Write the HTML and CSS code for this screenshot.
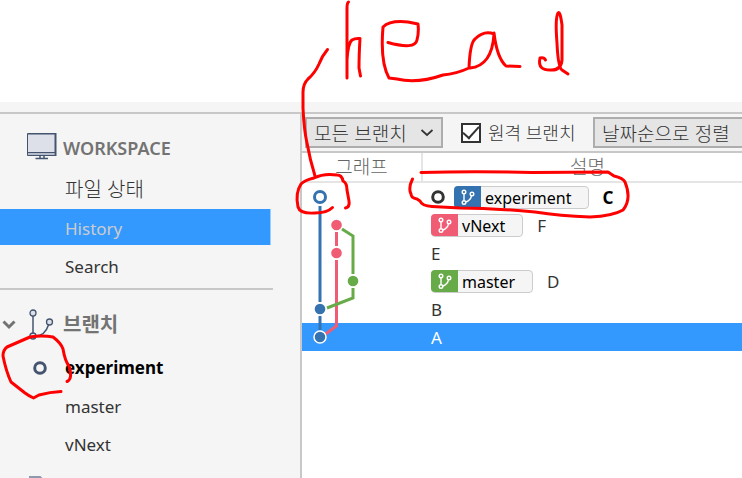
FILE: index.html
```html
<!DOCTYPE html>
<html lang="ko">
<head>
<meta charset="utf-8">
<title>History</title>
<link rel="stylesheet" href="styles.css">
</head>
<body>
<svg width="0" height="0" class="defs" aria-hidden="true">
  <symbol id="branch" viewBox="0 0 27 22">
    <g fill="none" stroke="#fff" stroke-width="1.4">
      <circle cx="10" cy="6" r="1.8"/><circle cx="10" cy="16.5" r="1.8"/><circle cx="18" cy="8" r="1.8"/>
      <path d="M10 8v6.5M17.5 10c-.8 3-2.5 5-5.7 6"/>
    </g>
  </symbol>
</svg>
<div class="app">
  <div class="strip"></div>
  <div class="body">
    <nav class="sidebar">
      <section class="group">
        <h2 class="heading">
          <svg class="monitor" width="32" height="28" viewBox="0 0 32 28">
            <path d="M1.5 1.5h28v22h-28z" fill="#dde0e8" stroke="#44546f" stroke-width="1"/>
            <path d="M2 2.5h27" stroke="#8e99ad"/><path d="M29.5 1v23" stroke="#44546f" stroke-width="2"/>
            <path d="M1 20.5h29" stroke="#44546f"/><path d="M2 22h26" stroke="#8e99ad"/>
            <path d="M14 24v2M18 24v2M9.500 26.500h12.500" stroke="#44546f" stroke-width="1.500"/>
          </svg>
          <span>WORKSPACE</span>
        </h2>
        <a class="item ko" href="#status">파일 상태</a>
        <a class="item selected" href="#history">History</a>
        <a class="item" href="#search">Search</a>
      </section>
      <section class="group branches">
        <h2 class="heading">
          <svg class="chevron" width="14" height="10" viewBox="0 0 14 10"><path d="M1.500 1.500 7 7l5.500-5.500" fill="none" stroke="#737373" stroke-width="3"/></svg>
          <svg class="fork" width="28" height="32" viewBox="0 0 28 32">
            <g fill="none" stroke="#44546f" stroke-width="1.500"><path d="M6 7v17M21.500 16c-2 6-5 11-13 11"/></g>
            <g fill="#dde0e8" stroke="#44546f" stroke-width="1.300"><circle cx="6" cy="4" r="3"/><circle cx="6" cy="27" r="3"/><circle cx="22.500" cy="13" r="3"/></g>
          </svg>
          <span class="ko">브랜치</span>
        </h2>
        <a class="item current" href="#experiment">
          <svg class="ring" width="14" height="14" viewBox="0 0 14 14"><circle cx="7" cy="7" r="5.300" fill="none" stroke="#44546f" stroke-width="3"/></svg>
          <span>experiment</span>
        </a>
        <a class="item" href="#master">master</a>
        <a class="item" href="#vnext">vNext</a>
        <svg class="tag-icon" width="16" height="14" viewBox="0 0 16 14"><path d="M2 1h10l3 3v8H2z" fill="#dde0e8" stroke="#8e99ad" stroke-width="2"/></svg>
      </section>
    </nav>
    <main class="main">
      <div class="toolbar">
        <span class="picker">
          <select class="select" aria-label="브랜치 필터"><option>모든 브랜치</option></select>
          <svg class="arrow" width="14" height="8" viewBox="0 0 14 8"><path d="m1.500 1 5.500 5 5.500-5" fill="none" stroke="#333" stroke-width="1.700"/></svg>
        </span>
        <label class="check"><input type="checkbox" checked><span>원격 브랜치</span></label>
        <select class="select order" aria-label="정렬"><option>날짜순으로 정렬</option></select>
      </div>
      <div class="log">
        <table class="commits">
          <thead><tr><th class="graph-col">그래프</th><th class="desc-col">설명</th></tr></thead>
          <tbody>
            <tr><td></td><td><div class="commit head"><svg width="14" height="14" viewBox="0 0 14 14"><circle cx="7" cy="7" r="5.300" fill="none" stroke="#333" stroke-width="3"/></svg><span class="tag"><svg class="blue" width="27" height="22"><use href="#branch"/></svg><span>experiment</span></span><b>C</b></div></td></tr>
            <tr><td></td><td><div class="commit"><span class="tag"><svg class="pink" width="27" height="22"><use href="#branch"/></svg><span>vNext</span></span><span>F</span></div></td></tr>
            <tr><td></td><td><div class="commit">E</div></td></tr>
            <tr><td></td><td><div class="commit"><span class="tag"><svg class="green" width="27" height="22"><use href="#branch"/></svg><span>master</span></span><span>D</span></div></td></tr>
            <tr><td></td><td><div class="commit">B</div></td></tr>
            <tr class="active"><td></td><td><div class="commit">A</div></td></tr>
          </tbody>
        </table>
        <svg class="graph" width="120" height="168" viewBox="302 183 120 168">
          <g fill="none" stroke-width="3">
            <path d="M320 206v96M320 316v14" stroke="#3572b0"/>
            <path d="M336.500 232v14M336.500 260v66l-11 8" stroke="#f15c75"/>
            <path d="M342 229l11 7v38M353 288v10l-26 10" stroke="#67ab49"/>
          </g>
          <circle cx="320" cy="197" r="5.500" fill="#fff" stroke="#3572b0" stroke-width="3"/>
          <circle cx="336.500" cy="225" r="5.300" fill="#f15c75"/><circle cx="336.500" cy="253" r="5.300" fill="#f15c75"/>
          <circle cx="353" cy="281" r="5.300" fill="#67ab49"/><circle cx="320" cy="309" r="5.300" fill="#3572b0"/>
          <circle cx="320" cy="337" r="6" fill="#3572b0" stroke="#fff" stroke-width="1.500"/>
        </svg>
      </div>
    </main>
  </div>
  <svg class="ink" width="742" height="478" viewBox="0 0 742 478" role="img" aria-label="head">
    <path d="M327.500 49.500Q322 56 319 64Q315 73 308 79Q303 84 303 92V108Q304 130 307 143Q310 160 315 176"/>
    <path d="M348.500 2Q347 3 347 8V78M347 60Q348 43 352 40Q355 38 360 38.500Q359 55 359 68L360.500 76"/>
    <path d="M388 42.500Q415 50 417 40Q419 33 418 24L408 22Q390 20 383 27Q380 62 389 78L397 79Q417 84 443 75Q456 74 469 68Q470 43 475 39Q484 30 494 34Q492 66 470 68M494 33Q497 58 506 66L520 66.500"/>
    <path d="M545.500 60Q544 57 540 58Q537 71 552 70Q561 70 562 60V25Q560 10 558 13Q555 18 557 43Q558 67 562 70L568 74"/>
    <path d="M332.500 207.500Q327 213 315 213Q300 214 298 207Q295 193 301 184Q305 180 314 178Q324 173 337 175Q342 175 343 181Q347 183 347 190L349 201Q350 207 345.500 208"/>
    <path d="M421 172.500Q475 171 532 172.500L608 172L614 176Q623 178 625 182Q632 199 623 210Q613 216 590 217Q560 216 535 212Q490 208 460 208L432 206.500Q422 206 420 201L417 199Q411 198 411 194Q408 188 412.500 179"/>
    <path d="M61 391.500Q50 392 39 395L33.500 398Q29 396 25 393L11 382Q6 371 3 356Q3 350 7 347L30 337Q42 335 53 337Q61 343 63 349Q65 361 69 366Q73 379 67 381.500"/>
  </svg>
</div>
</body>
</html>
```

FILE: styles.css
```css
* { box-sizing: border-box; }
body {
  margin: 0;
  background: #fff;
  color: #333;
  font: 17px/24px "Noto Sans", "Noto Sans CJK KR", sans-serif;
}
.defs { position: absolute; }
.app {
  position: relative;
  display: flex;
  flex-direction: column;
  height: 100vh;
  padding-top: 102px;
  overflow: hidden;
}
.strip { flex: none; height: 12px; background: #f5f5f5; border-bottom: 2px solid #c8c8c8; }
.body { flex: 1; display: flex; min-height: 0; }
.sidebar {
  flex: none;
  width: 302px;
  padding-top: 14px;
  background: #f5f5f5;
  border-right: 2px solid #c8c8c8;
  overflow: hidden;
}
.group { width: 273px; padding-bottom: 2px; border-bottom: 2px solid #c8c8c8; }
.branches { padding-top: 15px; border: 0; }
.heading {
  display: flex;
  align-items: center;
  height: 40px;
  margin: 0 0 3px;
  font-size: 18px;
  font-weight: 600;
  color: #737373;
}
.heading .ko { font-size: 20px; font-weight: 700; }
.monitor { margin: 0 5px 4px 26px; }
.chevron { margin: 0 11px 0 2px; }
.fork { margin-right: 8px; }
.item {
  display: flex;
  align-items: center;
  height: 38px;
  padding-left: 65px;
  color: #333;
  font-size: 17px;
  text-decoration: none;
}
.item.ko { font-size: 20px; font-weight: 300; }
.selected { width: 271px; height: 36px; margin-bottom: 3px; background: #39f; color: #ccc; padding-top: 4px; border-right: 1px solid #99ccff; }
.item.current { height: 40px; padding-left: 33px; font-weight: 700; color: #000; }
.ring { margin-right: 18px; }
.tag-icon { display: block; margin: 12px 0 0 28px; }
.main { flex: 1; min-width: 0; display: flex; flex-direction: column; }
.toolbar {
  display: flex;
  align-items: center;
  flex: none;
  height: 39px;
  padding: 0 3px;
  background: #f5f5f5;
  border-bottom: 2px solid #c8c8c8;
  overflow: hidden;
}
.picker { position: relative; flex: none; display: flex; }
.select {
  flex: none;
  appearance: none;
  width: 138px;
  height: 31px;
  padding: 0 7px;
  border: 2px solid #adadad;
  border-radius: 0;
  background: #e5e5e5;
  color: #333;
  font: 300 19px/24px "Noto Sans CJK KR", sans-serif;
}
.order { width: 180px; }
.arrow { position: absolute; right: 9px; top: 12px; }
.check { flex: none; display: flex; align-items: center; gap: 7px; width: 132px; margin-left: 18px; font-size: 18px; font-weight: 300; }
.check input {
  appearance: none;
  width: 20px;
  height: 20px;
  margin: 0;
  border: 2px solid #333;
  background: #fff;
  display: grid;
  place-items: center;
}
.check input:checked::before {
  content: "";
  width: 14px;
  height: 7px;
  margin-bottom: 4px;
  border: solid #333;
  border-width: 0 0 2px 2px;
  transform: rotate(-48deg);
}
.log { position: relative; }
.commits { width: 100%; table-layout: fixed; border-collapse: separate; border-spacing: 0; }
th {
  height: 30px;
  padding: 0;
  border-bottom: 2px solid #e5e5e5;
  font-weight: 300;
  font-size: 19px;
  color: #666;
}
.graph-col { width: 121px; border-right: 2px solid #e5e5e5; }
.desc-col { padding-left: 10px; }
td { height: 28px; padding: 0 0 0 8px; }
.commit { display: flex; align-items: center; gap: 14px; height: 28px; padding-top: 2px; }
.head { gap: 9px; }
.head b { margin-left: 4px; color: #000; }
.tag {
  display: flex;
  align-items: center;
  height: 23px;
  margin-bottom: 2px;
  padding-right: 17px;
  border: 1px solid #ccc;
  border-radius: 4px;
  background: #f5f5f5;
  color: #000;
  font-size: 16px;
}
.head > svg { margin-bottom: 2px; }
.tag span { padding-top: 2px; }
.tag svg { margin: 0 4px 0 -1px; border-radius: 4px 0 0 4px; }
.blue { background: #3572b0; }
.pink { background: #f15c75; }
.green { background: #67ab49; }
.active { background: #39f; color: #fff; }
.graph { position: absolute; left: 0; bottom: 0; }
.ink {
  position: absolute;
  left: 0;
  top: 0;
  pointer-events: none;
  fill: none;
  stroke: #f00;
  stroke-width: 3px;
  stroke-linecap: round;
  stroke-linejoin: round;
}
```
